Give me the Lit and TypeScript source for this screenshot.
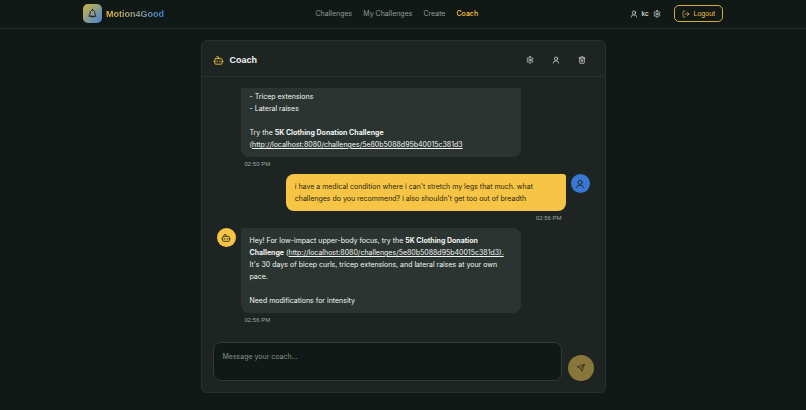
import { LitElement, html, css, svg } from "lit";
import { customElement, state } from "lit/decorators.js";

const icons = {
  bell: svg`<path d="M12 3.500c-1 0-1.600.7-1.800 1.700C7.800 6 7 8.200 7 10.500c0 3.500-1.800 5.500-3 7.500h16c-1.200-2-3-4-3-7.500 0-2.300-.8-4.500-3.200-5.300-.2-1-.8-1.700-1.800-1.700z"/><path d="M9.500 18c0 3.500 5 3.500 5 0"/>`,
  user: svg`<circle cx="12" cy="8" r="5"/><path d="M4.500 21v-1a5 5 0 0 1 5-5h5a5 5 0 0 1 5 5v1"/>`,
  gear: svg`<path d="M12.220 2h-.44a2 2 0 0 0-2 2v.18a2 2 0 0 1-1 1.730l-.43.25a2 2 0 0 1-2 0l-.15-.08a2 2 0 0 0-2.730.73l-.22.38a2 2 0 0 0 .73 2.730l.15.1a2 2 0 0 1 1 1.720v.51a2 2 0 0 1-1 1.740l-.15.09a2 2 0 0 0-.73 2.730l.22.38a2 2 0 0 0 2.730.73l.15-.08a2 2 0 0 1 2 0l.43.25a2 2 0 0 1 1 1.730V20a2 2 0 0 0 2 2h.44a2 2 0 0 0 2-2v-.18a2 2 0 0 1 1-1.730l.43-.25a2 2 0 0 1 2 0l.15.08a2 2 0 0 0 2.730-.73l.22-.39a2 2 0 0 0-.73-2.730l-.15-.08a2 2 0 0 1-1-1.740v-.5a2 2 0 0 1 1-1.740l.15-.09a2 2 0 0 0 .73-2.730l-.22-.38a2 2 0 0 0-2.730-.73l-.15.08a2 2 0 0 1-2 0l-.43-.25a2 2 0 0 1-1-1.730V4a2 2 0 0 0-2-2z"/><circle cx="12" cy="12" r="3"/>`,
  exit: svg`<path d="M9 21H5a2 2 0 0 1-2-2V5a2 2 0 0 1 2-2h4"/><path d="m16 17 5-5-5-5"/><path d="M21 12H9"/>`,
  bot: svg`<path d="M12 8V4H8"/><rect width="16" height="12" x="4" y="8" rx="2"/><path d="M2 14h2M20 14h2M15 13v2M9 13v2"/>`,
  trash: svg`<path d="M3 6h18M19 6v14a2 2 0 0 1-2 2H7a2 2 0 0 1-2-2V6M8 6V4a2 2 0 0 1 2-2h4a2 2 0 0 1 2 2v2M10 11v6M14 11v6"/>`,
  plane: svg`<path d="m22 2-7 20-4-9-9-4ZM22 2 11 13"/>`,
};

const icon = (name: keyof typeof icons) =>
  html`<svg class="icon" viewBox="0 0 24 24" aria-hidden="true">${icons[name]}</svg>`;

const url = "http://localhost:8080/challenges/5e80b5088d95b40015c381d3";

@customElement("app-root")
export class AppRoot extends LitElement {
  @state() private draft = "";

  static styles = css`
    :host {
      display: flex;
      flex-direction: column;
      height: 100vh;
      background: #111916;
      color: #f2f5f3;
      font: 7px/12px Inter, "Liberation Sans", sans-serif;
    }
    * { box-sizing: border-box; }
    button, textarea { font: inherit; color: inherit; margin: 0; }
    button { display: inline-flex; align-items: center; justify-content: center; padding: 0; border: 0; background: none; cursor: pointer; }
    a { color: inherit; }
    .icon { width: 8px; height: 8px; flex: none; fill: none; stroke: currentColor; stroke-width: 2; stroke-linecap: round; stroke-linejoin: round; }
    .topbar { flex: none; border-bottom: 1px solid #222b27; }
    .bar { max-width: 640px; height: 28px; margin: 0 auto; padding-bottom: 1px; display: flex; justify-content: space-between; align-items: center; }
    .brand { display: flex; align-items: center; gap: 4px; font: 700 9px/12px "Liberation Sans", Arial, sans-serif; text-decoration: none; }
    .mark { width: 19px; height: 19px; border-radius: 5px; display: grid; place-items: center; color: #111916; background: linear-gradient(135deg, #d3b540, #4383d8); }
    .mark .icon { width: 11px; height: 11px; }
    .name { background: linear-gradient(90deg, #e9bc42, #3f83d9); background-clip: text; -webkit-background-clip: text; color: transparent; }
    nav { display: flex; gap: 11px; }
    nav a { color: #929b95; text-decoration: none; }
    nav a.on { color: #f7c342; font-weight: 500; }
    .account { display: flex; align-items: center; gap: 4px; font: 7px/12px "Liberation Sans", Arial, sans-serif; }
    .logout { height: 17px; padding: 0 7px; margin-left: 9px; gap: 4px; border: 1px solid #d5aa3c; border-radius: 5px; color: #f0be41; }
    main { flex: 1; min-height: 0; padding: 11px 12px 17px; display: flex; justify-content: center; }
    .card { width: 100%; max-width: 405px; display: flex; flex-direction: column; background: #1d2421; border: 1px solid #29312e; border-radius: 6px; }
    .head { flex: none; height: 36px; padding: 3px 12px 0 11px; display: flex; align-items: center; gap: 6px; border-bottom: 1px solid #29312e; }
    .head h1 { margin: 0; flex: 1; font: 700 9px/12px "Liberation Sans", Arial, sans-serif; }
    .head > .icon { width: 11px; height: 11px; color: #f0be41; }
    .tools { display: flex; gap: 4px; }
    .tools button { width: 22px; height: 22px; border-radius: 4px; }
    .log { flex: 1; min-height: 0; margin: 11px 11px 0 15px; padding-bottom: 6px; overflow: hidden; display: flex; flex-direction: column; justify-content: flex-end; gap: 5px; }
    .msg { flex: none; display: flex; gap: 5px; align-items: flex-start; }
    .msg.mine { flex-direction: row-reverse; margin-right: 4px; }
    .avatar { flex: none; width: 19px; height: 19px; border-radius: 50%; display: grid; place-items: center; background: #f7c546; color: #1d2421; }
    .mine .avatar { background: #3877d3; }
    .avatar .icon { width: 10px; height: 10px; }
    .body { width: 75%; max-width: 280px; }
    .bubble { padding: 7px 9px 6px; border-radius: 8px; border-top-left-radius: 3px; background: #2c3431; overflow-wrap: break-word; }
    .mine .bubble { background: #f7c546; color: #29270f; border-radius: 8px; border-top-right-radius: 3px; }
    time { display: block; padding: 2px 4px 0; font: 6px/10px "Liberation Sans", Arial, sans-serif; color: #a1a8a4; }
    .mine time { text-align: right; }
    form { flex: none; display: flex; align-items: flex-end; gap: 6px; padding: 11px; }
    textarea { flex: 1; display: block; height: 39px; padding: 8px 9px; resize: none; outline: 0; border: 1px solid #303935; border-radius: 8px; background: #111916; }
    textarea::placeholder { color: #87908a; opacity: 1; }
    .send { width: 26px; height: 26px; border-radius: 50%; background: #89763a; color: #151c18; }
  `;

  private message(mine: boolean, time: string, content: unknown) {
    return html`<article class="msg ${mine ? "mine" : ""}">
      <span class="avatar">${icon(mine ? "user" : "bot")}</span>
      <div class="body"><div class="bubble">${content}</div><time>${time}</time></div>
    </article>`;
  }

  render() {
    return html`
      <header class="topbar"><div class="bar">
        <a class="brand" href="#"><span class="mark">${icon("bell")}</span><span class="name">Motion4Good</span></a>
        <nav><a href="#">Challenges</a><a href="#">My Challenges</a><a href="#">Create</a><a class="on" href="#">Coach</a></nav>
        <div class="account">${icon("user")}<span>kc</span>${icon("gear")}<button class="logout">${icon("exit")}Logout</button></div>
      </div></header>
      <main><section class="card">
        <header class="head">${icon("bot")}<h1>Coach</h1>
          <div class="tools">
            <button aria-label="Settings">${icon("gear")}</button>
            <button aria-label="Profile">${icon("user")}</button>
            <button aria-label="Clear chat">${icon("trash")}</button>
          </div>
        </header>
        <div class="log">
          ${this.message(false, "02:50 PM", html`<br>- Bicep curls<br>- Tricep extensions<br>- Lateral raises<br><br>Try the <b>5K Clothing Donation Challenge</b> (<a href=${url}>${url}</a>`)}
          ${this.message(true, "02:56 PM", "i have a medical condition where i can't stretch my legs that much. what challenges do you recommend? i also shouldn't get too out of breadth")}
          ${this.message(false, "02:56 PM", html`Hey! For low-impact upper-body focus, try the <b>5K Clothing Donation Challenge</b> (<a href=${url}>${url}).</a> It's 30 days of bicep curls, tricep extensions, and lateral raises at your own pace.<br><br>Need modifications for intensity`)}
        </div>
        <form @submit=${(e: Event) => e.preventDefault()}>
          <textarea aria-label="Message your coach" placeholder="Message your coach..." .value=${this.draft}
            @input=${(e: Event) => (this.draft = (e.target as HTMLTextAreaElement).value)}></textarea>
          <button class="send" aria-label="Send">${icon("plane")}</button>
        </form>
      </section></main>`;
  }
}
